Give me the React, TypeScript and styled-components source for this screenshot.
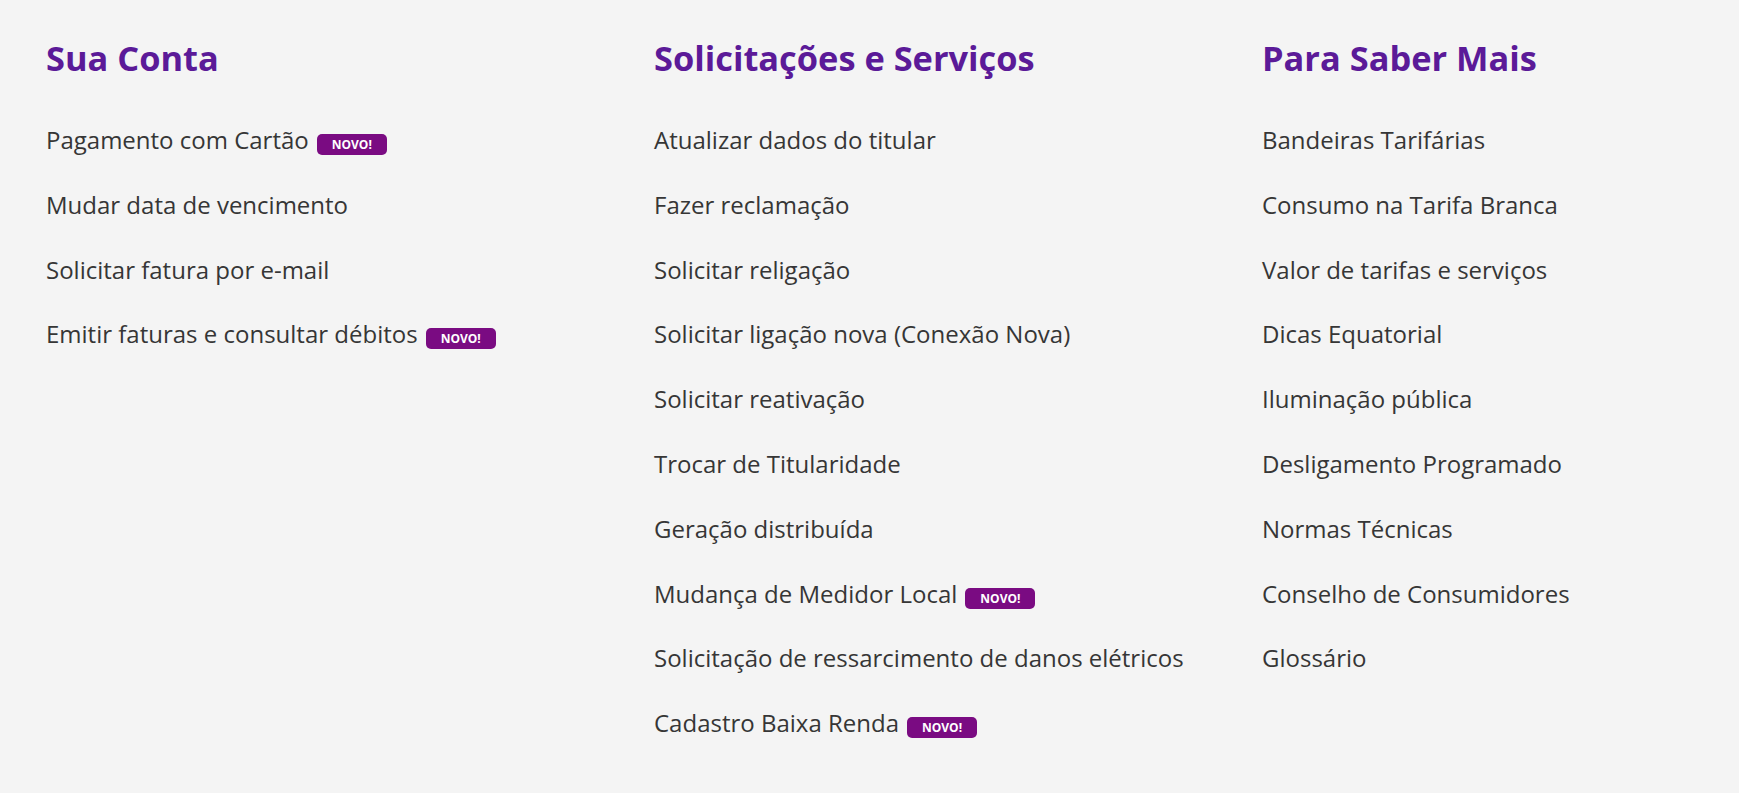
import styled, { createGlobalStyle } from "styled-components";

type TLink = { label: string; isNew?: boolean };
type TSection = { title: string; links: TLink[] };

const sections: TSection[] = [
  {
    title: "Sua Conta",
    links: [
      { label: "Pagamento com Cartão", isNew: true },
      { label: "Mudar data de vencimento" },
      { label: "Solicitar fatura por e-mail" },
      { label: "Emitir faturas e consultar débitos", isNew: true },
    ],
  },
  {
    title: "Solicitações e Serviços",
    links: [
      { label: "Atualizar dados do titular" },
      { label: "Fazer reclamação" },
      { label: "Solicitar religação" },
      { label: "Solicitar ligação nova (Conexão Nova)" },
      { label: "Solicitar reativação" },
      { label: "Trocar de Titularidade" },
      { label: "Geração distribuída" },
      { label: "Mudança de Medidor Local", isNew: true },
      { label: "Solicitação de ressarcimento de danos elétricos" },
      { label: "Cadastro Baixa Renda", isNew: true },
    ],
  },
  {
    title: "Para Saber Mais",
    links: [
      { label: "Bandeiras Tarifárias" },
      { label: "Consumo na Tarifa Branca" },
      { label: "Valor de tarifas e serviços" },
      { label: "Dicas Equatorial" },
      { label: "Iluminação pública" },
      { label: "Desligamento Programado" },
      { label: "Normas Técnicas" },
      { label: "Conselho de Consumidores" },
      { label: "Glossário" },
    ],
  },
];

function App() {
  return (
    <>
      <GlobalStyle />
      <Wrapper>
        {sections.map((section) => (
          <Column key={section.title}>
            <Title>{section.title}</Title>
            <LinkList>
              {section.links.map((link) => (
                <LinkItem key={link.label}>
                  <Link href="#">{link.label}</Link>
                  {link.isNew && <Badge>NOVO!</Badge>}
                </LinkItem>
              ))}
            </LinkList>
          </Column>
        ))}
      </Wrapper>
    </>
  );
}

export default App;

const GlobalStyle = createGlobalStyle`
  html, body {
    margin: 0;
    padding: 0;
    background: #f4f4f4;
    font-family: "Open Sans", "Noto Sans", Arial, sans-serif;
  }
`;

const Wrapper = styled.div`
  display: grid;
  grid-template-columns: 608px 608px 1fr;
  padding: 37px 0 0 46px;
  min-height: 793px;
  box-sizing: border-box;
`;

const Column = styled.section`
  display: flex;
  flex-direction: column;
`;

const Title = styled.h2`
  margin: 0;
  font-size: 34.4px;
  line-height: 42px;
  font-weight: 700;
  color: #5b1a98;
`;

const LinkList = styled.ul`
  list-style: none;
  margin: 43px 0 0;
  padding: 0;
  display: flex;
  flex-direction: column;
  gap: 28.8px;
`;

const LinkItem = styled.li`
  font-size: 24px;
  line-height: 36px;
  color: #363636;
  white-space: nowrap;
`;

const Link = styled.a`
  color: inherit;
  text-decoration: none;
`;

const Badge = styled.span`
  display: inline-block;
  margin-left: 8px;
  height: 21px;
  padding: 0 15px;
  border-radius: 5px;
  background: #7a0b82;
  color: #ffffff;
  font-size: 12px;
  line-height: 21px;
  font-weight: 700;
  vertical-align: 0;
`;
